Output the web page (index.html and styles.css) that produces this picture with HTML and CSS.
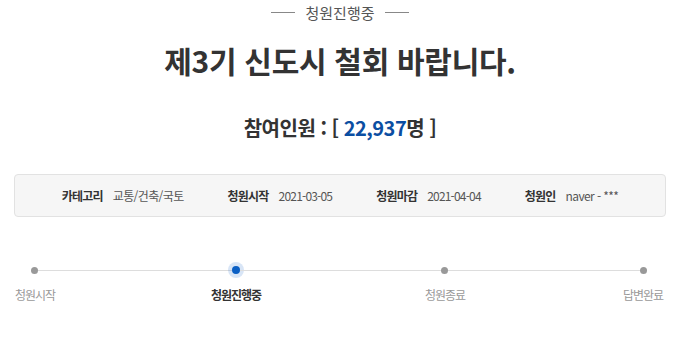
FILE: index.html
```html
<!DOCTYPE html>
<html lang="ko">
<head>
    <meta charset="UTF-8">
    <meta name="viewport" content="width=device-width, initial-scale=1.0">
    <title>청원 상세</title>
    <link rel="stylesheet" href="styles.css">
</head>
<body>
    <div class="petition">
        <div class="status">
            <span class="status-line"></span>
            <span class="status-text">청원진행중</span>
            <span class="status-line"></span>
        </div>

        <h1 class="title">제3기 신도시 철회 바랍니다.</h1>

        <h2 class="count">참여인원 : [ <span class="count-num">22,937</span>명 ]</h2>

        <div class="info-box">
            <div class="info-item"><span class="info-label">카테고리</span><span class="info-value">교통/건축/국토</span></div>
            <div class="info-item"><span class="info-label">청원시작</span><span class="info-value date">2021-03-05</span></div>
            <div class="info-item"><span class="info-label">청원마감</span><span class="info-value date">2021-04-04</span></div>
            <div class="info-item"><span class="info-label">청원인</span><span class="info-value">naver - ***</span></div>
        </div>

        <div class="progress">
            <div class="track">
                <span class="dot"></span>
                <span class="seg seg-1"></span>
                <span class="dot active"></span>
                <span class="seg seg-2"></span>
                <span class="dot"></span>
                <span class="seg seg-3"></span>
                <span class="dot"></span>
            </div>
            <div class="labels">
                <span class="label">청원시작</span>
                <span class="label active">청원진행중</span>
                <span class="label">청원종료</span>
                <span class="label">답변완료</span>
            </div>
        </div>
    </div>
</body>
</html>
```

FILE: styles.css
```css
body {
    margin: 0;
    background-color: #fff;
    font-family: "Noto Sans CJK KR", "Noto Sans", sans-serif;
    color: #333;
}

.petition {
    width: 680px;
    padding-top: 2px;
}

.status {
    display: flex;
    justify-content: center;
    align-items: center;
    gap: 10px;
    height: 20px;
}

.status-line {
    width: 24px;
    height: 1px;
    background-color: #888;
}

.status-text {
    font-size: 15px;
    color: #555;
}

.title {
    margin: 18px 0 0;
    text-align: center;
    font-size: 30px;
    font-weight: 700;
    letter-spacing: -0.3px;
    line-height: 40px;
    color: #333;
}

.count {
    margin: 34px 0 0;
    text-align: center;
    font-size: 20px;
    font-weight: 700;
    line-height: 28px;
    letter-spacing: -0.5px;
    color: #333;
}

.count-num {
    color: #0b4ea2;
}

.info-box {
    display: flex;
    justify-content: center;
    align-items: center;
    gap: 44px;
    margin: 32px 14px 0;
    height: 41px;
    background-color: #f6f6f6;
    border: 1px solid #e2e2e2;
    border-radius: 4px;
    font-size: 12px;
}

.info-item {
    display: flex;
    align-items: center;
    gap: 10px;
}

.info-label {
    font-weight: 700;
    color: #333;
    letter-spacing: -0.8px;
}

.info-value {
    color: #555;
    letter-spacing: -0.6px;
}

.info-value.date {
    letter-spacing: -0.8px;
}

.progress {
    margin-top: 48px;
}

.track {
    display: flex;
    align-items: center;
    padding: 0 33px 0 31px;
    height: 10px;
}

.seg {
    flex-basis: 0;
    height: 1px;
    background-color: #ddd;
}

.seg-1 { flex-grow: 193; }
.seg-2 { flex-grow: 201; }
.seg-3 { flex-grow: 191; }

.dot {
    width: 7px;
    height: 7px;
    border-radius: 50%;
    background-color: #999;
}

.dot.active {
    width: 8px;
    height: 8px;
    background-color: #0a5fc4;
    box-shadow: 0 0 0 4px rgba(10, 95, 196, 0.16);
}

.labels {
    display: grid;
    grid-template-columns: 60px 141fr 60px 149fr 60px 138fr 60px;
    padding: 0 7px 0 5px;
    margin-top: 11px;
}

.label {
    text-align: center;
    font-size: 12px;
    color: #999;
    letter-spacing: -1px;
}

.label:nth-child(2) { grid-column: 3; }
.label:nth-child(3) { grid-column: 5; }
.label:nth-child(4) { grid-column: 7; }

.label.active {
    font-weight: 700;
    color: #333;
}
```
